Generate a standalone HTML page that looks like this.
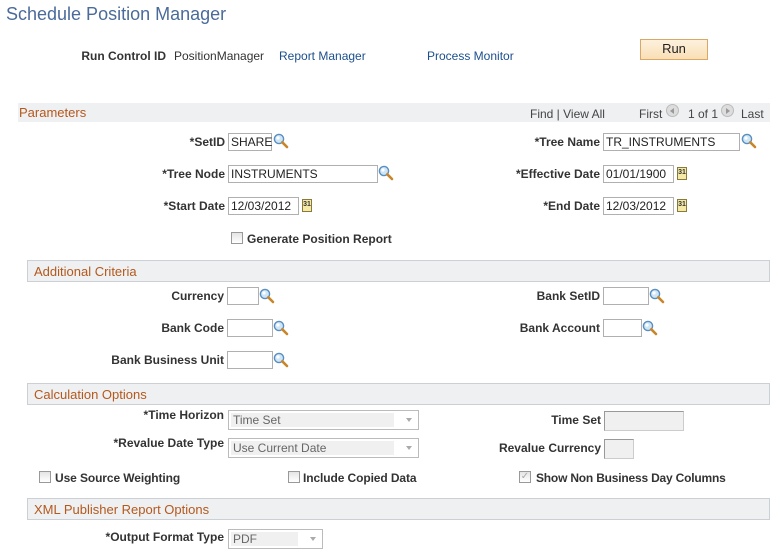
<!DOCTYPE html>
<html><head><meta charset="utf-8"><style>
body{margin:0;width:782px;height:558px;background:#fff;font-family:"Liberation Sans",Arial,sans-serif;font-size:12px;color:#333;position:relative;overflow:hidden}
.a{position:absolute;white-space:nowrap}
.lb{position:absolute;white-space:nowrap;font-weight:bold;color:#333;text-align:right}
.in{position:absolute;border:1px solid #b0b0b0;background:#fff;height:18px;box-sizing:border-box;padding:1px 2px;font-size:12px;line-height:14px;color:#222}
.dis{background:#f0f0f0;border-color:#999 #ccc #ccc #999}
.sel{position:absolute;border:1px solid #bbb;background:#fff;height:20px;box-sizing:border-box;font-size:12px;color:#666;padding:3px 4px;line-height:13px}
.sel .f{position:absolute;left:2px;top:2px;bottom:2px;background:#f0f0f0}
.sel span{position:relative}
.sel .ar{position:absolute;right:6px;top:7px;width:0;height:0;border-left:3px solid transparent;border-right:3px solid transparent;border-top:4px solid #aaa}
.bar{position:absolute;left:27px;width:743px;height:20px;background:#eef0f2;border:1px solid #ccd0d4;box-sizing:border-box;color:#b5581c;font-size:13px;padding:2px 6px;line-height:15px}
.lk{color:#1b4f8e}
.cb{position:absolute;width:12px;height:12px;border:1px solid #999;background:linear-gradient(#e4e4e4,#fff);box-sizing:border-box}
.mg{position:absolute;width:16px;height:16px}
.cal{position:absolute;width:10px;height:13px;border:1px solid #8a7a3a;background:#f5e9a8;box-sizing:border-box;font-size:7px;line-height:10px;text-align:center;font-weight:bold;color:#333}
.nav{position:absolute;width:13px;height:13px;border-radius:50%;background:#ddd;border:1px solid #bbb;box-sizing:border-box}
</style></head><body>
<svg width="0" height="0" style="position:absolute"><defs><g id="m"><circle cx="6" cy="6" r="4.6" fill="#cfe6f7" stroke="#5b8fc0" stroke-width="1.4"/><circle cx="5" cy="5" r="1.6" fill="#fff"/><line x1="9.3" y1="9.3" x2="14" y2="14" stroke="#c8862a" stroke-width="2.6" stroke-linecap="round"/></g></defs></svg>

<div class="a" style="left:6px;top:4px;font-size:18px;color:#4a6b9a">Schedule Position Manager</div>
<div class="lb" style="right:616px;top:49px">Run Control ID</div>
<div class="a" style="left:174px;top:49px">PositionManager</div>
<div class="a lk" style="left:279px;top:49px">Report Manager</div>
<div class="a lk" style="left:427px;top:49px">Process Monitor</div>
<div class="a" style="left:640px;top:39px;width:68px;height:21px;box-sizing:border-box;border:1px solid #d9a866;background:linear-gradient(#fdf1dd,#f9dfb5);text-align:center;line-height:18px;font-size:13px;color:#222">Run</div>

<div class="a" style="left:18px;top:103px;width:752px;height:19px;background:#eef0f2"></div>
<div class="a" style="left:19px;top:105px;font-size:13px;color:#b5581c">Parameters</div>
<div class="a" style="left:530px;top:107px;color:#444">Find | View All</div>
<div class="a" style="left:639px;top:107px;color:#444">First</div>
<div class="nav" style="left:666px;top:104px"><div style="position:absolute;left:3px;top:3px;border-top:3px solid transparent;border-bottom:3px solid transparent;border-right:4px solid #999"></div></div>
<div class="a" style="left:688px;top:107px;color:#444">1 of 1</div>
<div class="nav" style="left:721px;top:104px"><div style="position:absolute;left:4px;top:3px;border-top:3px solid transparent;border-bottom:3px solid transparent;border-left:4px solid #999"></div></div>
<div class="a" style="left:741px;top:107px;color:#444">Last</div>

<div class="lb" style="right:557px;top:135px">*SetID</div>
<div class="in" style="left:228px;top:133px;width:44px">SHARE</div>
<svg class="mg" style="left:273px;top:133px"><use href="#m"/></svg>
<div class="lb" style="right:182px;top:135px">*Tree Name</div>
<div class="in" style="left:603px;top:133px;width:137px">TR_INSTRUMENTS</div>
<svg class="mg" style="left:741px;top:133px"><use href="#m"/></svg>

<div class="lb" style="right:557px;top:167px">*Tree Node</div>
<div class="in" style="left:228px;top:165px;width:150px">INSTRUMENTS</div>
<svg class="mg" style="left:378px;top:165px"><use href="#m"/></svg>
<div class="lb" style="right:182px;top:167px">*Effective Date</div>
<div class="in" style="left:603px;top:165px;width:71px">01/01/1900</div>
<div class="cal" style="left:677px;top:167px">31</div>

<div class="lb" style="right:557px;top:199px">*Start Date</div>
<div class="in" style="left:228px;top:197px;width:71px">12/03/2012</div>
<div class="cal" style="left:302px;top:199px">31</div>
<div class="lb" style="right:182px;top:199px">*End Date</div>
<div class="in" style="left:603px;top:197px;width:71px">12/03/2012</div>
<div class="cal" style="left:677px;top:199px">31</div>

<div class="cb" style="left:231px;top:232px"></div>
<div class="lb" style="left:247px;top:232px">Generate Position Report</div>

<div class="bar" style="top:260px;height:22px;padding-top:3px">Additional Criteria</div>
<div class="lb" style="right:558px;top:289px">Currency</div>
<div class="in" style="left:227px;top:287px;width:32px"></div>
<svg class="mg" style="left:259px;top:288px"><use href="#m"/></svg>
<div class="lb" style="right:182px;top:289px">Bank SetID</div>
<div class="in" style="left:603px;top:287px;width:46px"></div>
<svg class="mg" style="left:649px;top:288px"><use href="#m"/></svg>

<div class="lb" style="right:558px;top:321px">Bank Code</div>
<div class="in" style="left:227px;top:319px;width:46px"></div>
<svg class="mg" style="left:273px;top:320px"><use href="#m"/></svg>
<div class="lb" style="right:182px;top:321px">Bank Account</div>
<div class="in" style="left:603px;top:319px;width:39px"></div>
<svg class="mg" style="left:642px;top:320px"><use href="#m"/></svg>

<div class="lb" style="right:558px;top:353px">Bank Business Unit</div>
<div class="in" style="left:227px;top:351px;width:46px"></div>
<svg class="mg" style="left:273px;top:352px"><use href="#m"/></svg>

<div class="bar" style="top:383px;height:22px;padding-top:3px">Calculation Options</div>
<div class="lb" style="right:558px;top:408px">*Time Horizon</div>
<div class="sel" style="left:228px;top:410px;width:191px"><div class="f" style="right:24px"></div><span>Time Set</span><div class="ar"></div></div>
<div class="lb" style="right:181px;top:413px">Time Set</div>
<div class="in dis" style="left:604px;top:411px;width:80px;height:20px"></div>
<div class="lb" style="right:181px;top:441px">Revalue Currency</div>
<div class="in dis" style="left:604px;top:439px;width:30px;height:20px"></div>
<div class="lb" style="right:558px;top:436px">*Revalue Date Type</div>
<div class="sel" style="left:228px;top:438px;width:191px"><div class="f" style="right:24px"></div><span>Use Current Date</span><div class="ar"></div></div>

<div class="cb" style="left:39px;top:471px"></div>
<div class="lb" style="left:55px;top:471px;letter-spacing:-0.1px">Use Source Weighting</div>
<div class="cb" style="left:288px;top:471px"></div>
<div class="lb" style="left:303px;top:471px;letter-spacing:-0.1px">Include Copied Data</div>
<div class="cb" style="left:519px;top:471px;color:#aaa;font-size:10px;line-height:10px;text-align:center">✓</div>
<div class="lb" style="left:536px;top:471px;letter-spacing:-0.2px">Show Non Business Day Columns</div>

<div class="bar" style="top:498px;height:22px;padding-top:3px">XML Publisher Report Options</div>
<div class="lb" style="right:558px;top:530px">*Output Format Type</div>
<div class="sel" style="left:228px;top:529px;width:95px"><div class="f" style="right:24px"></div><span>PDF</span><div class="ar"></div></div>
</body></html>
